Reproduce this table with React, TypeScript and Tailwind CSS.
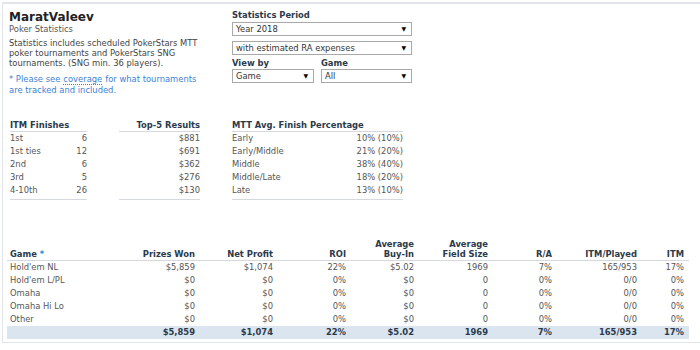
import React from "react";

const font = { fontFamily: '"DejaVu Sans", Verdana, sans-serif' };

function Select({ label, className }: { label: string; className: string }) {
  return (
    <div
      className={`flex items-center justify-between h-[14px] border border-[#a9a9a9] bg-white pl-[3px] pr-[5px] text-[#333] ${className}`}
    >
      <span className="leading-none">{label}</span>
      <span className="text-[6px] leading-none text-black">▼</span>
    </div>
  );
}

const itm = [
  ["1st", "6"],
  ["1st ties", "12"],
  ["2nd", "6"],
  ["3rd", "5"],
  ["4-10th", "26"],
];
const top5 = ["$881", "$691", "$362", "$276", "$130"];
const mtt = [
  ["Early", "10% (10%)"],
  ["Early/Middle", "21% (20%)"],
  ["Middle", "38% (40%)"],
  ["Middle/Late", "18% (20%)"],
  ["Late", "13% (10%)"],
];

const rows = [
  ["Hold'em NL", "$5,859", "$1,074", "22%", "$5.02", "1969", "7%", "165/953", "17%"],
  ["Hold'em L/PL", "$0", "$0", "0%", "$0", "0", "0%", "0/0", "0%"],
  ["Omaha", "$0", "$0", "0%", "$0", "0", "0%", "0/0", "0%"],
  ["Omaha Hi Lo", "$0", "$0", "0%", "$0", "0", "0%", "0/0", "0%"],
  ["Other", "$0", "$0", "0%", "$0", "0", "0%", "0/0", "0%"],
];
const total = ["", "$5,859", "$1,074", "22%", "$5.02", "1969", "7%", "165/953", "17%"];

export default function App() {
  return (
    <div className="w-[700px] h-[350px] bg-white overflow-hidden text-[8.4px]" style={font}>
      <div className="ml-[2px] mt-[2px] w-[720px] h-[341px] border-l border-t-2 border-b border-[#e1e4e8] text-[#444]">
        {/* top */}
        <div className="flex pt-[6px] pl-[6px]">
          <div className="w-[223px]">
            <div className="text-[12px] font-bold text-[#222] leading-[14px]">MaratValeev</div>
            <div className="mt-0 leading-[10px] text-[#555]">Poker Statistics</div>
            <div className="mt-[4px] w-[206px] leading-[10px] text-[#444]">
              <div>Statistics includes scheduled PokerStars MTT</div>
              <div>poker tournaments and PokerStars SNG</div>
              <div>tournaments. (SNG min. 36 players).</div>
            </div>
            <div className="mt-[6px] leading-[10px] text-[#3d7fd6]">
              <div className="flex items-baseline gap-[3px] whitespace-nowrap">
                <span>* Please see</span>
                <span className="border-b border-dotted border-[#3d7fd6]">coverage</span>
                <span>for what tournaments</span>
              </div>
              <div>are tracked and included.</div>
            </div>
          </div>
          <div className="w-[180px]">
            <div className="font-bold text-[#2b3a4b] leading-[11px]">Statistics Period</div>
            <Select label="Year 2018" className="w-[180px] mt-[1px]" />
            <Select label="with estimated RA expenses" className="w-[180px] mt-[5px]" />
            <div className="flex gap-[7px] mt-[3px]">
              <div>
                <div className="font-bold text-[#2b3a4b] leading-[11px]">View by</div>
                <Select label="Game" className="w-[82px]" />
              </div>
              <div>
                <div className="font-bold text-[#2b3a4b] leading-[11px]">Game</div>
                <Select label="All" className="w-[91px]" />
              </div>
            </div>
          </div>
        </div>

        {/* stats */}
        <div className="flex gap-[32px] pl-[7px] mt-[25px]">
          <div className="w-[77px]">
            <div className="font-bold text-[#2b3a4b] leading-[10px] pb-[1px] border-b border-[#d5d9de]">ITM Finishes</div>
            {itm.map(([a, b]) => (
              <div key={a} className="flex justify-between leading-[13px] text-[#555]">
                <span>{a}</span>
                <span>{b}</span>
              </div>
            ))}
            <div className="border-b border-[#d5d9de] mt-[2px]" />
          </div>
          <div className="w-[81px]">
            <div className="font-bold text-[#2b3a4b] leading-[10px] pb-[1px] border-b border-[#d5d9de] text-right">Top-5 Results</div>
            {top5.map((a) => (
              <div key={a} className="text-right leading-[13px] text-[#555]">{a}</div>
            ))}
            <div className="border-b border-[#d5d9de] mt-[2px]" />
          </div>
          <div className="w-[171px]">
            <div className="font-bold text-[#2b3a4b] leading-[10px] pb-[1px] border-b border-[#d5d9de]">MTT Avg. Finish Percentage</div>
            {mtt.map(([a, b]) => (
              <div key={a} className="flex justify-between leading-[13px] text-[#555]">
                <span>{a}</span>
                <span>{b}</span>
              </div>
            ))}
            <div className="border-b border-[#d5d9de] mt-[2px]" />
          </div>
        </div>

        {/* table */}
        <div className="mt-[39px] pl-[4px]">
          <table className="table-fixed border-collapse w-[682px]">
            <colgroup>
              <col className="w-[114px]" />
              <col className="w-[79px]" />
              <col className="w-[78px]" />
              <col className="w-[73px]" />
              <col className="w-[68px]" />
              <col className="w-[74px]" />
              <col className="w-[64px]" />
              <col className="w-[85px]" />
              <col className="w-[47px]" />
            </colgroup>
            <thead>
              <tr className="border-b border-[#d5d9de] text-[#2b3a4b] font-bold align-bottom leading-[10px]">
                <th className="text-left pl-[3px] pb-[1px] font-bold">
                  Game <span className="text-[#3d7fd6]">*</span>
                </th>
                <th className="text-right pr-[5px] pb-[1px] font-bold">Prizes Won</th>
                <th className="text-right pr-[5px] pb-[1px] font-bold">Net Profit</th>
                <th className="text-right pr-[5px] pb-[1px] font-bold">ROI</th>
                <th className="text-right pr-[5px] pb-[1px] font-bold">Average<br />Buy-In</th>
                <th className="text-right pr-[5px] pb-[1px] font-bold">Average<br />Field Size</th>
                <th className="text-right pr-[5px] pb-[1px] font-bold">R/A</th>
                <th className="text-right pr-[5px] pb-[1px] font-bold">ITM/Played</th>
                <th className="text-right pr-[5px] pb-[1px] font-bold">ITM</th>
              </tr>
            </thead>
            <tbody>
              {rows.map((r) => (
                <tr key={r[0]} className="leading-[13px] text-[#555]">
                  {r.map((c, i) => (
                    <td key={i} className={i === 0 ? "text-left pl-[3px]" : "text-right pr-[5px]"}>
                      {c}
                    </td>
                  ))}
                </tr>
              ))}
              <tr className="leading-[13px] bg-[#dbe5f0] font-bold text-[#2b3a4b]">
                {total.map((c, i) => (
                  <td key={i} className={i === 0 ? "text-left pl-[3px]" : "text-right pr-[5px]"}>
                    {c}
                  </td>
                ))}
              </tr>
            </tbody>
          </table>
        </div>
      </div>
    </div>
  );
}
